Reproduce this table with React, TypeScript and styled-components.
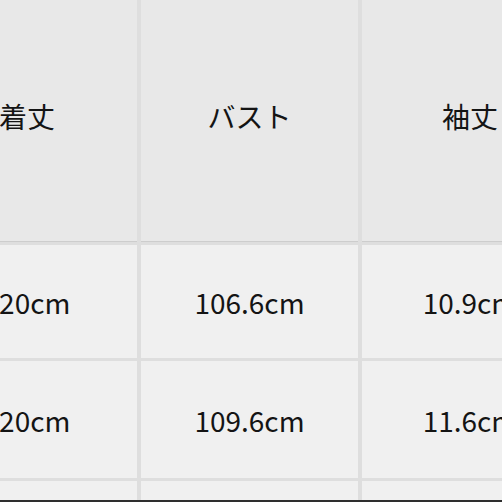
import React, { FC } from 'react';
import styled, { createGlobalStyle } from 'styled-components';

const GlobalStyle = createGlobalStyle`
  html, body {
    margin: 0;
    padding: 0;
    background: #2e2e2e;
  }
`;

const Page = styled.div`
  width: 502px;
  height: 502px;
  overflow: hidden;
  display: flex;
  flex-direction: column;
  font-family: 'Noto Sans CJK JP', 'Noto Sans', sans-serif;
  color: #141414;
`;

const Table = styled.div`
  margin-left: -83px;
  width: 661px;
  display: grid;
  grid-template-columns: 220px 217px 216px;
  grid-template-rows: 242px 113px 117px 19px;
  column-gap: 4px;
  row-gap: 3px;
  background: #dedede;
  flex: none;
`;

const Cell = styled.div<{ $head?: boolean }>`
  display: flex;
  align-items: center;
  justify-content: center;
  box-sizing: border-box;
  padding-bottom: ${p => (p.$head ? '10px' : '0')};
  background: ${p => (p.$head ? '#e8e8e8' : '#f0f0f0')};
  border-bottom: ${p => (p.$head ? '1px solid #cdcdcd' : 'none')};
  font-size: 28px;
  line-height: 1;
  white-space: nowrap;
`;

const BottomEdge = styled.div`
  flex: 1;
  background: #2e2e2e;
`;

const headers = ['着丈', 'バスト', '袖丈'];
const rows = [
  ['120cm', '106.6cm', '10.9cm'],
  ['120cm', '109.6cm', '11.6cm'],
  ['', '', ''],
];

const App: FC = () => (
  <>
    <GlobalStyle />
    <Page>
      <Table>
        {headers.map(h => (
          <Cell key={h} $head>
            {h}
          </Cell>
        ))}
        {rows.map((r, i) =>
          r.map((v, j) => <Cell key={`${i}-${j}`}>{v}</Cell>)
        )}
      </Table>
      <BottomEdge />
    </Page>
  </>
);

export default App;
